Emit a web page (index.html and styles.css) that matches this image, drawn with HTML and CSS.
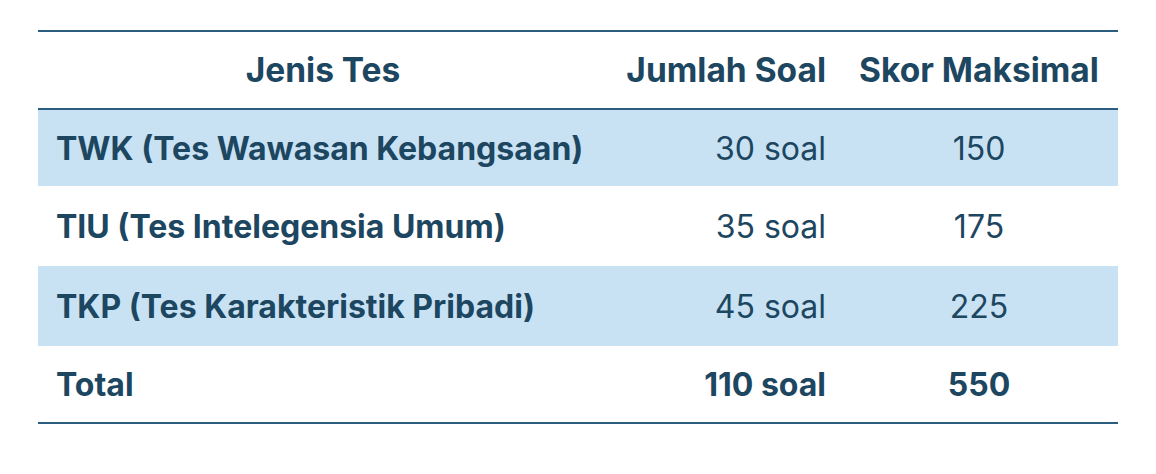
FILE: index.html
```html
<!DOCTYPE html>
<html lang="id">
<head>
<meta charset="utf-8">
<link rel="stylesheet" href="styles.css">
<title>Tes</title>
</head>
<body>
<table class="tbl">
  <colgroup>
    <col class="c1"><col class="c2"><col class="c3">
  </colgroup>
  <thead>
    <tr class="head">
      <th class="name-h">Jenis Tes</th>
      <th class="num">Jumlah Soal</th>
      <th class="score">Skor Maksimal</th>
    </tr>
  </thead>
  <tbody>
    <tr class="alt r76">
      <td class="name">TWK (Tes Wawasan Kebangsaan)</td>
      <td class="num">30 soal</td>
      <td class="score">150</td>
    </tr>
    <tr class="r80">
      <td class="name">TIU (Tes Intelegensia Umum)</td>
      <td class="num">35 soal</td>
      <td class="score">175</td>
    </tr>
    <tr class="alt r80">
      <td class="name">TKP (Tes Karakteristik Pribadi)</td>
      <td class="num">45 soal</td>
      <td class="score">225</td>
    </tr>
    <tr class="total r76">
      <td class="name">Total</td>
      <td class="num">110 soal</td>
      <td class="score">550</td>
    </tr>
  </tbody>
</table>
</body>
</html>
```
FILE: styles.css
```css
html, body {
  margin: 0;
  padding: 0;
  background: #ffffff;
}
body {
  padding-top: 30px;
  font-family: "Inter", "Noto Sans", sans-serif;
  color: #1d4661;
}
.tbl {
  width: 1080px;
  margin: 0 auto;
  border-collapse: separate;
  border-spacing: 0;
  table-layout: fixed;
  border-top: 2px solid #2a5d7f;
  border-bottom: 2px solid #2a5d7f;
}
.c1 { width: 570px; }
.c2 { width: 232px; }
.c3 { width: 278px; }
th, td {
  padding: 0;
  font-size: 32px;
  white-space: nowrap;
}
.head th {
  height: 76px;
  font-size: 33.5px;
  font-weight: 700;
  border-bottom: 2px solid #2a5d7f;
}
.name-h { text-align: center; }
.name { text-align: left; padding-left: 18px; font-weight: 700; }
.num { text-align: right; padding-right: 14px; }
.score { text-align: center; }
.r76 td { height: 76px; }
.r80 td { height: 80px; }
.alt td { background: #c8e2f4; }
.total td { font-weight: 700; }
```
